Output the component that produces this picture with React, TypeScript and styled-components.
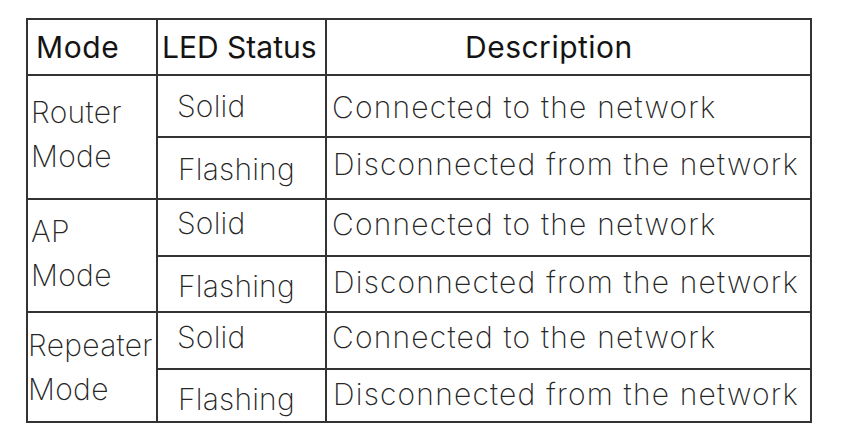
import React from "react";
import styled, { createGlobalStyle } from "styled-components";

const GlobalStyle = createGlobalStyle`
  html, body {
    margin: 0;
    padding: 0;
    background: #fff;
  }
  body {
    font-family: Inter, "Noto Sans", sans-serif;
    color: #222;
  }
`;

interface Entry {
  status: string;
  statusTop: number;
  statusLeft: number;
  desc: string;
  descTop: number;
  descLeft: number;
  height: number;
}

interface ModeGroup {
  name: string[];
  top: number;
  left: number;
  rows: Entry[];
}

const groups: ModeGroup[] = [
  {
    name: ["Router", "Mode"],
    top: 14,
    left: 3,
    rows: [
      { status: "Solid", statusTop: 12, statusLeft: 19, desc: "Connected to the network", descTop: 13, descLeft: 5, height: 62 },
      { status: "Flashing", statusTop: 13, statusLeft: 20, desc: "Disconnected from the network", descTop: 8, descLeft: 6, height: 62 },
    ],
  },
  {
    name: ["AP", "Mode"],
    top: 9,
    left: 3,
    rows: [
      { status: "Solid", statusTop: 5, statusLeft: 19, desc: "Connected to the network", descTop: 6, descLeft: 5, height: 57 },
      { status: "Flashing", statusTop: 11, statusLeft: 20, desc: "Disconnected from the network", descTop: 7, descLeft: 6, height: 56 },
    ],
  },
  {
    name: ["Repeater", "Mode"],
    top: 10,
    left: 0,
    rows: [
      { status: "Solid", statusTop: 6, statusLeft: 19, desc: "Connected to the network", descTop: 6, descLeft: 5, height: 57 },
      { status: "Flashing", statusTop: 11, statusLeft: 20, desc: "Disconnected from the network", descTop: 6, descLeft: 6, height: 53 },
    ],
  },
];

const App = () => {
  return (
    <>
      <GlobalStyle />
      <Page>
        <Table>
          <colgroup>
            <col style={{ width: 130 }} />
            <col style={{ width: 169 }} />
            <col style={{ width: 485 }} />
          </colgroup>
          <thead>
            <Row $height={56}>
              <HeadCell $top={9} $left={8} $spacing={0.6}>Mode</HeadCell>
              <HeadCell $top={9} $left={4} $spacing={0}>LED Status</HeadCell>
              <HeadCell $top={9} $left={138} $spacing={0.5}>Description</HeadCell>
            </Row>
          </thead>
          <tbody>
            {groups.map((group) =>
              group.rows.map((entry, index) => (
                <Row key={`${group.name[0]}-${index}`} $height={entry.height}>
                  {index === 0 && (
                    <ModeCell rowSpan={group.rows.length} $top={group.top} $left={group.left} $spacing={0.3}>
                      {group.name[0]}
                      <br />
                      {group.name[1]}
                    </ModeCell>
                  )}
                  <Cell $top={entry.statusTop} $left={entry.statusLeft} $spacing={0.2}>
                    {entry.status}
                  </Cell>
                  <Cell $top={entry.descTop} $left={entry.descLeft} $spacing={1.2}>
                    {entry.desc}
                  </Cell>
                </Row>
              ))
            )}
          </tbody>
        </Table>
      </Page>
    </>
  );
};

export default App;

const Page = styled.div`
  width: 841px;
  height: 443px;
  padding: 18px 0 0 26px;
  box-sizing: border-box;
`;

const Table = styled.table`
  border-collapse: collapse;
  table-layout: fixed;
  width: 784px;
  border: 2px solid #333;
`;

const Row = styled.tr<{ $height: number }>`
  height: ${(p) => p.$height}px;
`;

const Cell = styled.td<{ $top: number; $left: number; $spacing: number }>`
  border: 2px solid #333;
  vertical-align: top;
  padding: ${(p) => p.$top}px 0 0 ${(p) => p.$left}px;
  font-size: 30px;
  font-weight: 250;
  letter-spacing: ${(p) => p.$spacing}px;
  line-height: 36px;
  white-space: nowrap;
  color: #262626;
`;

const HeadCell = styled(Cell).attrs({ as: "th" })`
  text-align: left;
  font-weight: 400;
  color: #141414;
`;

const ModeCell = styled(Cell)`
  line-height: 44px;
`;
